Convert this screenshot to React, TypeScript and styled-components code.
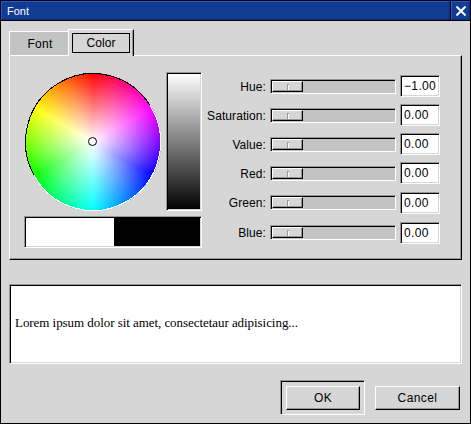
import React from 'react';
import styled, { createGlobalStyle, css } from 'styled-components';

const FACE = '#d6d6d6';
const TROUGH = '#c3c3c3';
const SHADOW = '#969696';

const GlobalStyle = createGlobalStyle`
  * { box-sizing: border-box; }
  body { margin: 0; background: ${FACE}; overflow: hidden; }
`;

const sunken = css`
  border: 1px solid;
  border-color: ${SHADOW} #fff #fff ${SHADOW};
  box-shadow: inset 1px 1px 0 #000, inset -1px -1px 0 ${FACE};
`;

const Window = styled.div`
  width: 471px;
  height: 424px;
  border: 1px solid #000;
  background: ${FACE};
  color: #000;
  font: 12px/14px 'Liberation Sans', Arial, sans-serif;
  display: flex;
  flex-direction: column;
  white-space: nowrap;
`;

const TitleBar = styled.header`
  height: 20px;
  flex: none;
  display: flex;
  border-bottom: 1px solid #000;
  background: #000;
  color: #fff;
`;

const Title = styled.div`
  flex: 1;
  padding: 2px 0 0 5px;
  font-size: 11px;
  line-height: 14px;
  background: #103c94;
  border: 1px solid;
  border-color: #2459cf #0b2c70 #0b2c70 #2459cf;
`;

const CloseButton = styled.button`
  width: 19px;
  margin-left: 1px;
  padding: 0;
  border: 1px solid;
  border-color: #2459cf #0b2c70 #0b2c70 #2459cf;
  background: #103c94;
  display: flex;
  align-items: center;
  justify-content: center;
  svg { display: block; }
`;

const Content = styled.main`
  padding: 9px 8px 0;
`;

const TabStrip = styled.div`
  height: 25px;
  display: flex;
  align-items: flex-end;
`;

const Tab = styled.div<{ $active?: boolean }>`
  display: flex;
  align-items: center;
  justify-content: center;
  letter-spacing: ${(p) => (p.$active ? '0.1px' : '0.3px')};
  border-top: 1px solid #fff;
  border-left: 1px solid #fff;
  ${(p) =>
    p.$active
      ? css`
          width: 66px;
          height: 27px;
          margin-bottom: -1px;
          padding: 0 1px 0 0;
          background: ${FACE};
          border-right: 1px solid #000;
          box-shadow: inset -1px 0 0 ${SHADOW};
        `
      : css`
          width: 59px;
          height: 24px;
          background: ${TROUGH};
          padding-left: 2px;
        `}
`;

const FocusFrame = styled.span`
  width: 58px;
  height: 20px;
  margin: -1px 0 0 1px;
  border: 1px solid #000;
  display: flex;
  align-items: center;
  justify-content: center;
`;

const Panel = styled.section`
  width: 453px;
  height: 205px;
  border: 1px solid;
  border-color: #fff #000 #000 #fff;
  box-shadow: inset -1px -1px 0 ${SHADOW};
  padding: 16px 0 0 14px;
  display: flex;
`;

const Picker = styled.div`
  width: 178px;
  flex: none;
`;

const PickerTop = styled.div`
  height: 144px;
  display: flex;
  justify-content: space-between;
`;

const Wheel = styled.div`
  width: 136px;
  height: 138px;
  margin: 1px 0 0 1px;
  border-radius: 50%;
  background: radial-gradient(closest-side, #fff 0%, rgba(255, 255, 255, 0) 100%),
    conic-gradient(#f00, #f0f, #00f, #0ff, #0f0, #ff0, #f00);
  svg { display: block; overflow: visible; }
`;

const ValueBar = styled.div`
  ${sunken}
  width: 36px;
  height: 139px;
  background: linear-gradient(#fff, #000);
`;

const Swatches = styled.div`
  ${sunken}
  width: 178px;
  height: 32px;
  padding: 1px;
  display: flex;
`;

const Swatch = styled.div<{ $color: string; $width: number }>`
  width: ${(p) => p.$width}px;
  background: ${(p) => p.$color};
`;

const Channels = styled.div`
  margin: 3px 0 0 2px;
`;

const ChannelRow = styled.div<{ $height: number; $offset: number }>`
  height: ${(p) => p.$height}px;
  display: grid;
  grid-template-columns: 62px 126px 40px;
  column-gap: 4px;
  align-items: start;
  --offset: ${(p) => p.$offset}px;
`;

const ChannelLabel = styled.label`
  margin-top: calc(var(--offset) + 1px);
  text-align: right;
  letter-spacing: 0.08px;
`;

const Track = styled.div`
  border: 1px solid;
  border-color: ${SHADOW} #fff #fff ${SHADOW};
  box-shadow: inset 1px 1px 0 #000;
  background: ${TROUGH};
  height: 15px;
  margin-top: var(--offset);
  padding: 1px 0 0 1px;
`;

const Thumb = styled.div`
  width: 31px;
  height: 11px;
  background: ${FACE};
  border: 1px solid;
  border-color: #fff #000 #000 #fff;
  box-shadow: inset -1px -1px 0 ${SHADOW};
  display: flex;
  justify-content: center;
  align-items: center;
`;

const Grip = styled.span`
  width: 2px;
  height: 6px;
  margin-left: 1px;
  background: linear-gradient(90deg, ${SHADOW} 50%, #fff 50%);
  border-top: 1px solid ${SHADOW};
`;

const ValueField = styled.div`
  ${sunken}
  width: 40px;
  height: 22px;
  padding: 3px 0 0 3px;
  background: #fff;
  letter-spacing: 0.35px;
`;

const Preview = styled.div`
  ${sunken}
  width: 453px;
  height: 80px;
  margin-top: 24px;
  padding: 30px 0 0 5px;
  background: #fff;
  font: 13px/16px 'Liberation Serif', 'Times New Roman', serif;
  letter-spacing: -0.055px;
`;

const Actions = styled.footer`
  margin-top: 16px;
  display: flex;
  justify-content: flex-end;
  align-items: center;
  gap: 10px;
  padding-right: 2px;
`;

const DefaultRing = styled.div`
  ${sunken}
  box-shadow: inset 1px 1px 0 #000;
  width: 85px;
  height: 35px;
  padding: 5px 0 0 5px;
`;

const Button = styled.button<{ $width: number }>`
  display: block;
  width: ${(p) => p.$width}px;
  height: 24px;
  padding: 0;
  border: 1px solid;
  border-color: #fff #000 #000 #fff;
  box-shadow: inset -1px -1px 0 ${SHADOW};
  background: ${FACE};
  color: #000;
  font: inherit;
  letter-spacing: 0.4px;
`;

const channels = [
  { name: 'Hue', value: '−1.00', height: 29, offset: 4 },
  { name: 'Saturation', value: '0.00', height: 29, offset: 4 },
  { name: 'Value', value: '0.00', height: 29, offset: 4 },
  { name: 'Red', value: '0.00', height: 30, offset: 4 },
  { name: 'Green', value: '0.00', height: 30, offset: 3 },
  { name: 'Blue', value: '0.00', height: 22, offset: 3 },
];

export default function App() {
  return (
    <>
      <GlobalStyle />
      <Window>
        <TitleBar>
          <Title>Font</Title>
          <CloseButton aria-label="Close">
            <svg width="10" height="10" viewBox="0 0 10 10" stroke="#fff" strokeWidth="2" strokeLinecap="square">
              <path d="M1.2 1.2 L8.8 8.8 M8.8 1.2 L1.2 8.8" />
            </svg>
          </CloseButton>
        </TitleBar>
        <Content>
          <TabStrip>
            <Tab>Font</Tab>
            <Tab $active>
              <FocusFrame>Color</FocusFrame>
            </Tab>
          </TabStrip>
          <Panel>
            <Picker>
              <PickerTop>
                <Wheel>
                  <svg width="136" height="138" fill="none" strokeWidth="1" shapeRendering="crispEdges">
                    <path d="M124.93 32.2 A67.5 68.5 0 1 1 8.85 102" stroke="#fff" />
                    <path d="M8.85 102 A67.5 68.5 0 0 1 124.93 32.2" stroke="#000" />
                    <circle cx="67.5" cy="68.5" r="4" stroke="#000" fill="#fff" shapeRendering="auto" />
                  </svg>
                </Wheel>
                <ValueBar />
              </PickerTop>
              <Swatches>
                <Swatch $color="#fff" $width={88} />
                <Swatch $color="#000" $width={86} />
              </Swatches>
            </Picker>
            <Channels>
              {channels.map((c) => (
                <ChannelRow key={c.name} $height={c.height} $offset={c.offset}>
                  <ChannelLabel>{c.name}:</ChannelLabel>
                  <Track>
                    <Thumb>
                      <Grip />
                    </Thumb>
                  </Track>
                  <ValueField>{c.value}</ValueField>
                </ChannelRow>
              ))}
            </Channels>
          </Panel>
          <Preview>Lorem ipsum dolor sit amet, consectetaur adipisicing...</Preview>
          <Actions>
            <DefaultRing>
              <Button $width={74}>OK</Button>
            </DefaultRing>
            <Button $width={85}>Cancel</Button>
          </Actions>
        </Content>
      </Window>
    </>
  );
}
